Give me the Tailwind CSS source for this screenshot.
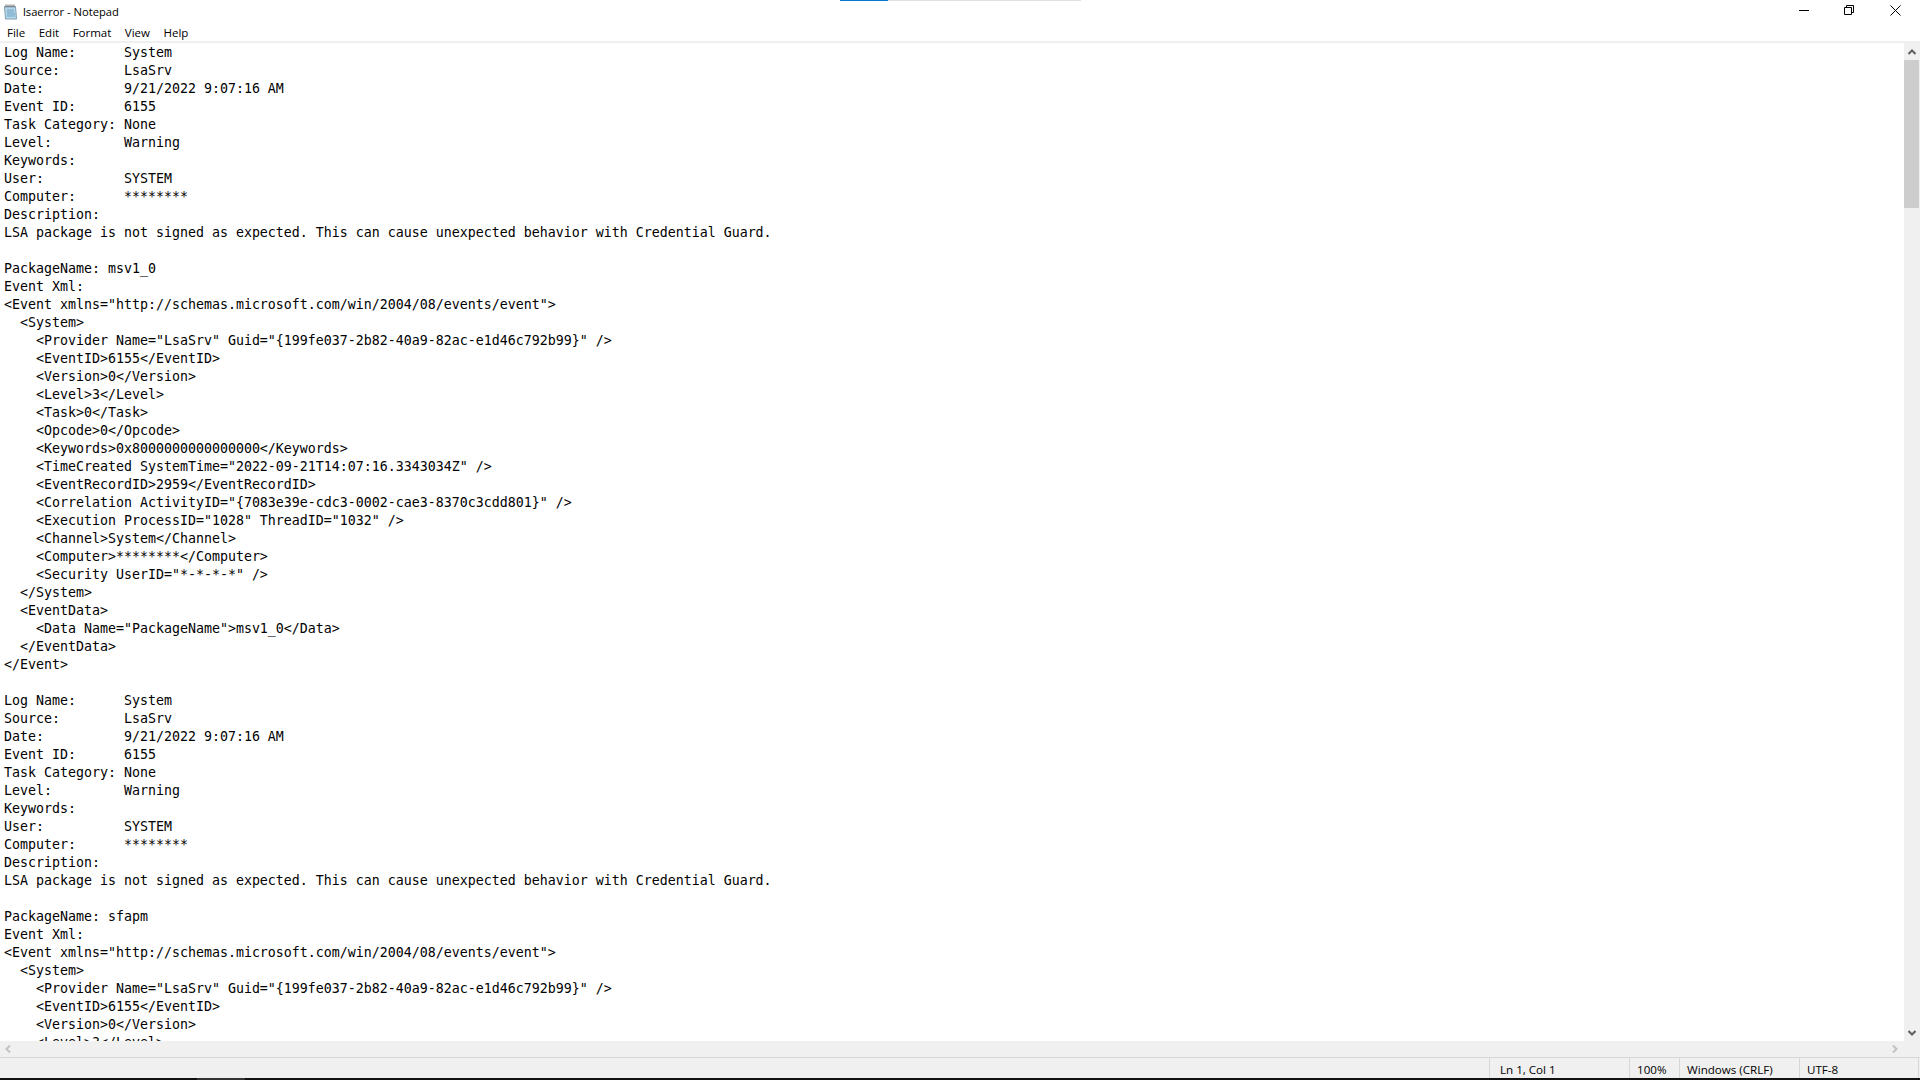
<!DOCTYPE html>
<html lang="en">

<head>
  <meta charset="UTF-8">
  <title>lsaerror - Notepad</title>
  <script src="https://cdn.jsdelivr.net/npm/@tailwindcss/browser@4"></script>
</head>

<body class="h-screen overflow-hidden bg-white">
  <div class="relative flex h-[1080px] w-[1920px] flex-col font-['Open_Sans','Liberation_Sans',sans-serif] text-black">

    <!-- loading strip at the top of the screen -->
    <div class="absolute left-[840px] top-0 flex h-px w-[241px]">
      <div class="w-12 bg-[#0078d7]"></div>
      <div class="flex-1 bg-[#e0e0e0]"></div>
    </div>

    <!-- title bar -->
    <div class="flex h-[23px] items-center justify-between">
      <div class="flex items-center gap-[5px] pl-[3px]">
        <svg class="h-4 w-[15px]" viewBox="0 0 15 16">
          <path d="M1.500 2.500h11l1 12.500h-11z" fill="#b5d8ec" stroke="#7f9db0" />
          <path d="M4 6h7M4 8h7M4 10h8M4 12h8" stroke="#6f9fc0" />
          <path d="M3 .5v3M5 .5v3M7 .5v3M9 .5v3M11 .5v3" stroke="#6e6e6e" />
        </svg>
        <span class="text-[11.2px] leading-none">lsaerror - Notepad</span>
      </div>
      <div class="mb-[3px] flex items-center">
        <svg class="mr-[35px] h-2.5 w-2.5" viewBox="0 0 10 10"><path d="M0 5.500h10" stroke="#000" /></svg>
        <svg class="mr-[36px] h-2.5 w-2.5" viewBox="0 0 10 10" fill="none" stroke="#000"><path d="M.5 2.500h7v7h-7z" /><path d="M2.500 2.500v-2h7v7h-2" /></svg>
        <svg class="mr-[19px] h-[11px] w-[11px]" viewBox="0 0 11 11" stroke="#000"><path d="M.5.5l10 10M10.500.5l-10 10" /></svg>
      </div>
    </div>

    <!-- menu -->
    <div class="flex h-[18px] items-center gap-[13.5px] pl-[7px] pt-[2px] text-[11.5px] leading-none">
      <span>File</span><span>Edit</span><span>Format</span><span>View</span><span>Help</span>
    </div>
    <div class="h-0.5 bg-[#f0f0f0]"></div>

    <!-- editor -->
    <div class="flex h-[998px] overflow-hidden">
      <pre class="flex-1 overflow-hidden pl-1 pt-px font-['DejaVu_Sans_Mono','Liberation_Mono',monospace] text-[13.29px] leading-[18px] text-black">Log Name:      System
Source:        LsaSrv
Date:          9/21/2022 9:07:16 AM
Event ID:      6155
Task Category: None
Level:         Warning
Keywords:      
User:          SYSTEM
Computer:      ********
Description:
LSA package is not signed as expected. This can cause unexpected behavior with Credential Guard.

PackageName: msv1_0
Event Xml:
&lt;Event xmlns="http://schemas.microsoft.com/win/2004/08/events/event"&gt;
  &lt;System&gt;
    &lt;Provider Name="LsaSrv" Guid="{199fe037-2b82-40a9-82ac-e1d46c792b99}" /&gt;
    &lt;EventID&gt;6155&lt;/EventID&gt;
    &lt;Version&gt;0&lt;/Version&gt;
    &lt;Level&gt;3&lt;/Level&gt;
    &lt;Task&gt;0&lt;/Task&gt;
    &lt;Opcode&gt;0&lt;/Opcode&gt;
    &lt;Keywords&gt;0x8000000000000000&lt;/Keywords&gt;
    &lt;TimeCreated SystemTime="2022-09-21T14:07:16.3343034Z" /&gt;
    &lt;EventRecordID&gt;2959&lt;/EventRecordID&gt;
    &lt;Correlation ActivityID="{7083e39e-cdc3-0002-cae3-8370c3cdd801}" /&gt;
    &lt;Execution ProcessID="1028" ThreadID="1032" /&gt;
    &lt;Channel&gt;System&lt;/Channel&gt;
    &lt;Computer&gt;********&lt;/Computer&gt;
    &lt;Security UserID="*-*-*-*" /&gt;
  &lt;/System&gt;
  &lt;EventData&gt;
    &lt;Data Name="PackageName"&gt;msv1_0&lt;/Data&gt;
  &lt;/EventData&gt;
&lt;/Event&gt;

Log Name:      System
Source:        LsaSrv
Date:          9/21/2022 9:07:16 AM
Event ID:      6155
Task Category: None
Level:         Warning
Keywords:      
User:          SYSTEM
Computer:      ********
Description:
LSA package is not signed as expected. This can cause unexpected behavior with Credential Guard.

PackageName: sfapm
Event Xml:
&lt;Event xmlns="http://schemas.microsoft.com/win/2004/08/events/event"&gt;
  &lt;System&gt;
    &lt;Provider Name="LsaSrv" Guid="{199fe037-2b82-40a9-82ac-e1d46c792b99}" /&gt;
    &lt;EventID&gt;6155&lt;/EventID&gt;
    &lt;Version&gt;0&lt;/Version&gt;
    &lt;Level&gt;3&lt;/Level&gt;</pre>

      <!-- vertical scrollbar -->
      <div class="flex w-4 flex-col bg-[#f0f0f0]">
        <div class="flex h-[17px] w-[15px] items-center justify-center">
          <svg class="h-2 w-2" viewBox="0 0 8 8" fill="none" stroke="#606060" stroke-width="2"><path d="M.5 6L4 2.500 7.500 6" /></svg>
        </div>
        <div class="h-[148px] w-[15px] bg-[#cdcdcd]"></div>
        <div class="flex-1"></div>
        <div class="flex h-[17px] w-[15px] items-center justify-center">
          <svg class="h-2 w-2" viewBox="0 0 8 8" fill="none" stroke="#606060" stroke-width="2"><path d="M.5 2L4 5.500 7.500 2" /></svg>
        </div>
      </div>
    </div>

    <!-- horizontal scrollbar -->
    <div class="flex h-4 items-center justify-between bg-[#f0f0f0] pl-1 pr-[21px]">
      <svg class="h-2 w-2" viewBox="0 0 8 8" fill="none" stroke="#c2c2c2" stroke-width="2"><path d="M6 .5L2.500 4 6 7.500" /></svg>
      <svg class="h-2 w-2" viewBox="0 0 8 8" fill="none" stroke="#c2c2c2" stroke-width="2"><path d="M2 .5L5.500 4 2 7.500" /></svg>
    </div>

    <!-- status bar -->
    <div class="flex h-[21px] items-center border-t border-[#d7d7d7] bg-[#f0f0f0] pr-px text-[11.6px] leading-none">
      <div class="flex-1"></div>
      <div class="flex h-full w-[140px] items-center border-l border-[#d7d7d7] pl-2.5 pt-1">Ln 1, Col 1</div>
      <div class="flex h-full w-[50px] items-center border-l border-[#d7d7d7] pl-[7px] pt-1">100%</div>
      <div class="flex h-full w-[120px] items-center border-l border-[#d7d7d7] pl-[7px] pt-1">Windows (CRLF)</div>
      <div class="flex h-full w-[120px] items-center border-x border-[#d7d7d7] pl-[7px] pt-1">UTF-8</div>
    </div>

    <!-- edge of the taskbar below the window -->
    <div class="flex h-0.5 bg-[#111111]">
      <div class="ml-[197px] w-12 bg-[#333333]"></div>
    </div>
  </div>
</body>

</html>
